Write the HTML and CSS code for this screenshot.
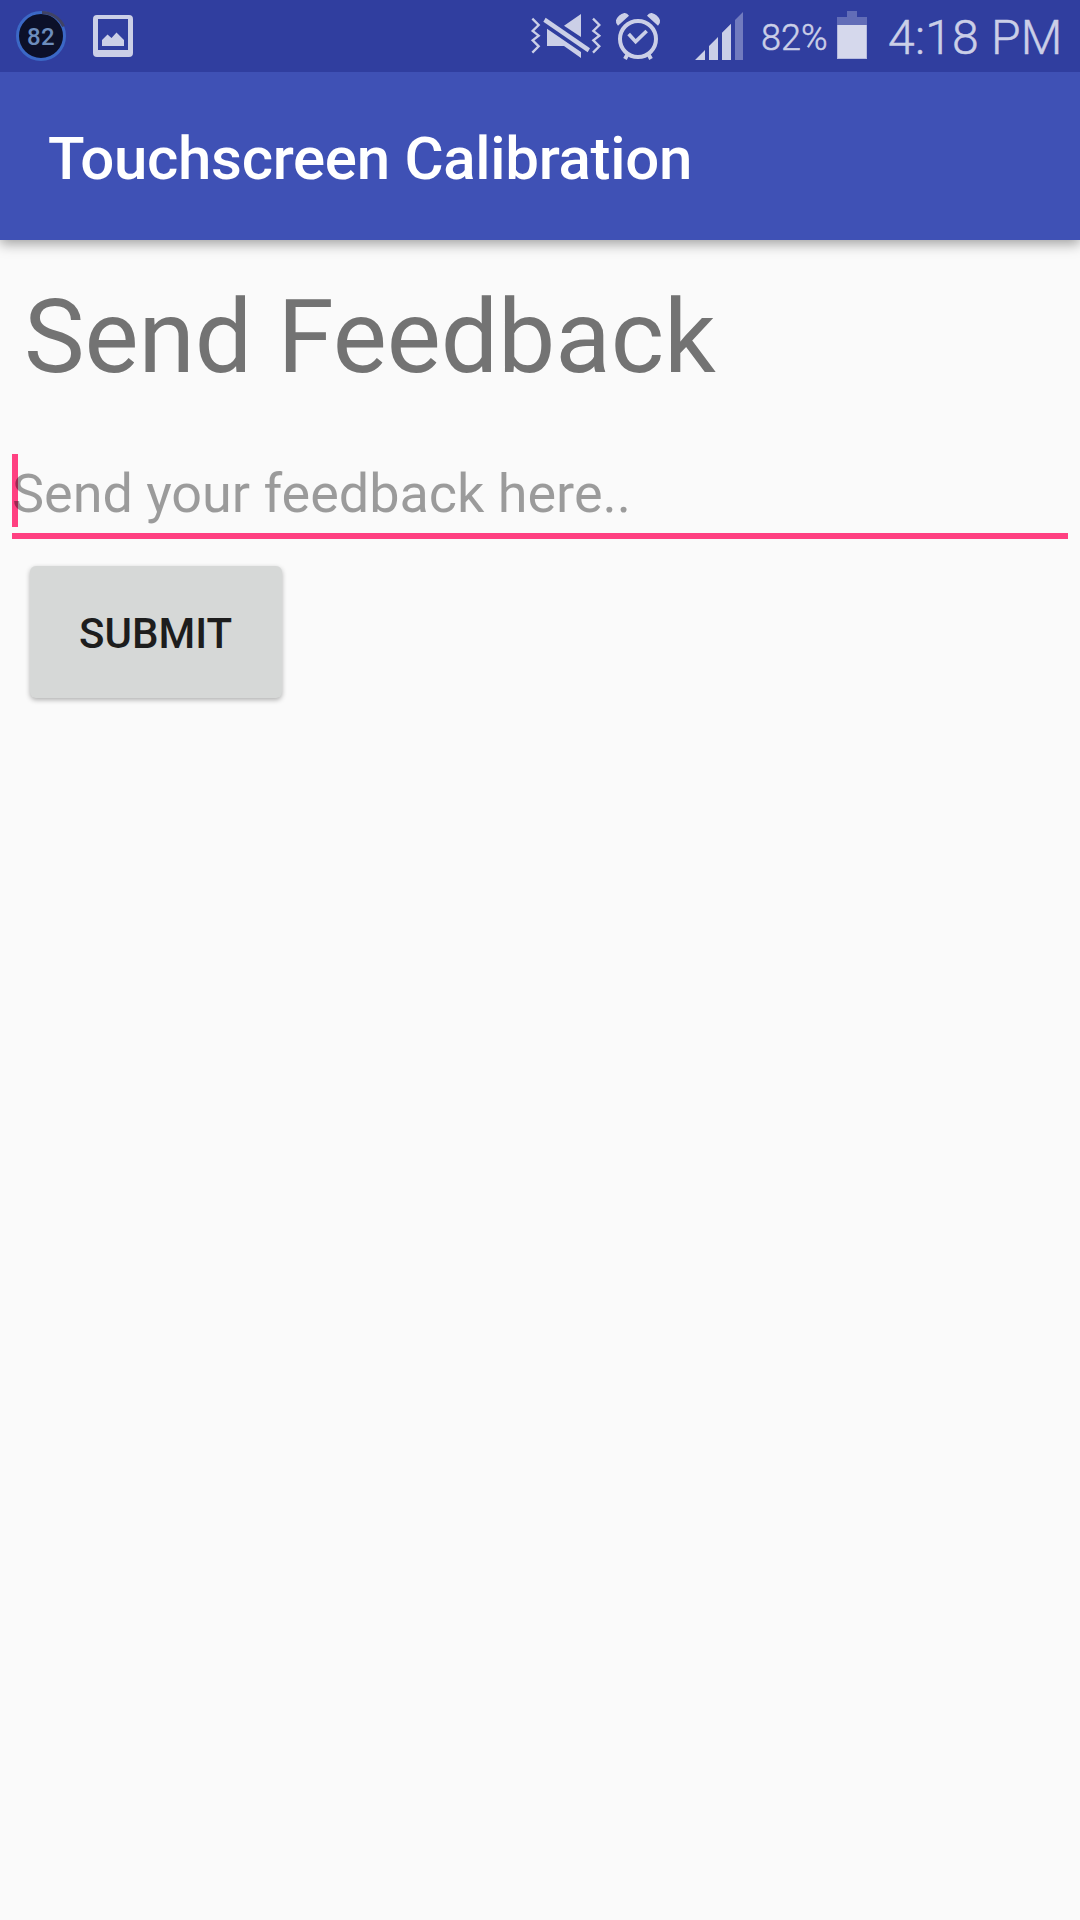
FILE: index.html
```html
<!DOCTYPE html>
<html lang="en">
<head>
<meta charset="utf-8">
<title>Touchscreen Calibration</title>
<link rel="stylesheet" href="styles.css">
</head>
<body>
<div class="status-bar">
  <div class="battery-badge">
    <svg width="50" height="50" viewBox="0 0 50 50" aria-hidden="true">
      <circle cx="25" cy="25" r="23.5" fill="#0c1029" stroke="#3b68c6" stroke-width="3"/>
      <path d="M26 1.5A23.500 23.500 0 0 1 47.500 15.500" fill="none" stroke="#404365" stroke-width="3"/>
    </svg>
    <span class="badge-value">82</span>
  </div>
  <svg class="icon-picture" width="40" height="42" viewBox="0 0 40 42" aria-hidden="true">
    <path fill-rule="evenodd" d="M4 0H36Q40 0 40 4V38Q40 42 36 42H4Q0 42 0 38V4Q0 0 4 0ZM5 4V35H35V4Z"/>
    <path d="M9 31V25L14.500 19.500L18.500 23L23.500 17.500L31 25V31Z"/>
  </svg>
  <div class="system-icons">
    <svg width="72" height="72" viewBox="60 0 216 216" aria-hidden="true">
      <path class="stroke" stroke-width="7" d="M67 56L86 75L68 93L86 107L68 121L86 139L67 158M249 56L268 75L250 93L268 107L250 121L268 139L249 158"/>
      <path d="M111 86L213 156V174L162 138H111ZM213 42V111L162 77Z"/>
      <path d="M107 53L240 145L233 157L100 65Z"/>
    </svg>
    <svg class="icon-alarm" width="48" height="72" viewBox="312 0 144 216" aria-hidden="true">
      <circle class="stroke" cx="384" cy="117" r="54" stroke-width="12"/>
      <path class="stroke" stroke-width="11" d="M356 102L377 125L410 93"/>
      <path d="M324 77Q316 69 318 61Q325 43 343 39Q351 38 357 47ZM444 77Q452 69 450 61Q443 43 425 39Q417 38 411 47Z"/>
      <path class="stroke" stroke-width="12" d="M352 164L345 177M416 164L423 177"/>
    </svg>
    <svg class="icon-signal" width="50" height="72" viewBox="72 0 150 216" aria-hidden="true">
      <path d="M75 180L105 150V180ZM117 180V138L144 111V180ZM156 180V98L183 71V180Z"/>
      <path fill="#717bbf" d="M195 180V60L219 36V180Z"/>
    </svg>
    <span class="battery-percent">82%</span>
    <svg class="icon-battery" width="32" height="72" viewBox="498 0 96 216" aria-hidden="true">
      <path fill="#626db7" d="M531 33H561V51H591V75H501V51H531Z"/>
      <path fill="#b5badf" d="M501 75H591V177H501Z"/>
      <path fill="#d5d8ec" d="M504 75H588V174H504Z"/>
    </svg>
    <span class="clock">4:18 PM</span>
  </div>
</div>
<header class="app-bar"><h1 class="app-title">Touchscreen Calibration</h1></header>
<main class="content">
  <h2 class="heading">Send Feedback</h2>
  <div class="field"><span class="caret"></span><span class="hint">Send your feedback here..</span></div>
  <button class="submit" type="button">SUBMIT</button>
</main>
</body>
</html>
```
FILE: styles.css
```css
* { box-sizing: border-box; }
body {
  margin: 0;
  min-height: 1920px;
  background: #fafafa;
  font-family: Roboto, "Liberation Sans", sans-serif;
}
h1, h2 { margin: 0; }
svg { display: block; flex: none; }
.status-bar {
  position: relative;
  z-index: 1;
  display: flex;
  align-items: center;
  height: 72px;
  padding: 0 16px;
  background: #303e9f;
  color: #cbcfe7;
  fill: #cbcfe7;
}
.stroke { fill: none; stroke: #cbcfe7; }
.battery-badge { position: relative; }
.badge-value {
  position: absolute;
  inset: 0;
  line-height: 53px;
  text-align: center;
  font-size: 24px;
  font-weight: 500;
  letter-spacing: .4px;
  color: #6d8dbd;
}
.icon-picture { margin-left: 27px; }
.system-icons {
  display: flex;
  align-items: center;
  margin-left: 397px;
  white-space: nowrap;
}
.icon-alarm { margin-left: 12px; }
.icon-signal { margin-left: 32px; }
.battery-percent {
  width: 75px;
  margin-left: 17px;
  padding-top: 4px;
  font-size: 36px;
  font-weight: 300;
  -webkit-text-stroke: .5px #cbcfe7;
}
.clock {
  margin-left: 20px;
  padding-top: 2px;
  font-size: 48px;
  font-weight: 300;
  letter-spacing: .25px;
  -webkit-text-stroke: .5px #cbcfe7;
}
.app-bar {
  display: flex;
  align-items: center;
  height: 168px;
  padding: 6px 48px 0;
  background: #3f51b5;
  box-shadow: 0 4px 12px rgba(0, 0, 0, .36);
}
.app-title {
  color: #fff;
  font-size: 60px;
  font-weight: 500;
  line-height: 70px;
  letter-spacing: -.3px;
}
.content {
  display: flex;
  flex-direction: column;
  align-items: flex-start;
  padding: 37px 12px 0;
}
.heading {
  margin-left: 12px;
  color: #737373;
  font-size: 102px;
  font-weight: 400;
  line-height: 120px;
  letter-spacing: -.08px;
}
.field {
  position: relative;
  width: 100%;
  height: 85px;
  margin-top: 57px;
  border-bottom: 6px solid #ff4081;
}
.caret {
  position: absolute;
  left: 0;
  top: 0;
  width: 6px;
  height: 73px;
  background: #ff4081;
}
.hint {
  position: relative;
  display: block;
  color: rgba(0, 0, 0, .38);
  font-size: 54px;
  line-height: 80px;
  letter-spacing: -.03px;
}
.submit {
  width: 252px;
  height: 132px;
  margin: 27px 0 0 17.5px;
  padding: 2px 0 0;
  border: 0;
  border-radius: 6px;
  background: #d6d8d7;
  box-shadow: 0 2px 5px rgba(0, 0, 0, .3);
  color: #1d1d1d;
  font-family: inherit;
  font-size: 42px;
  font-weight: 500;
}
```
